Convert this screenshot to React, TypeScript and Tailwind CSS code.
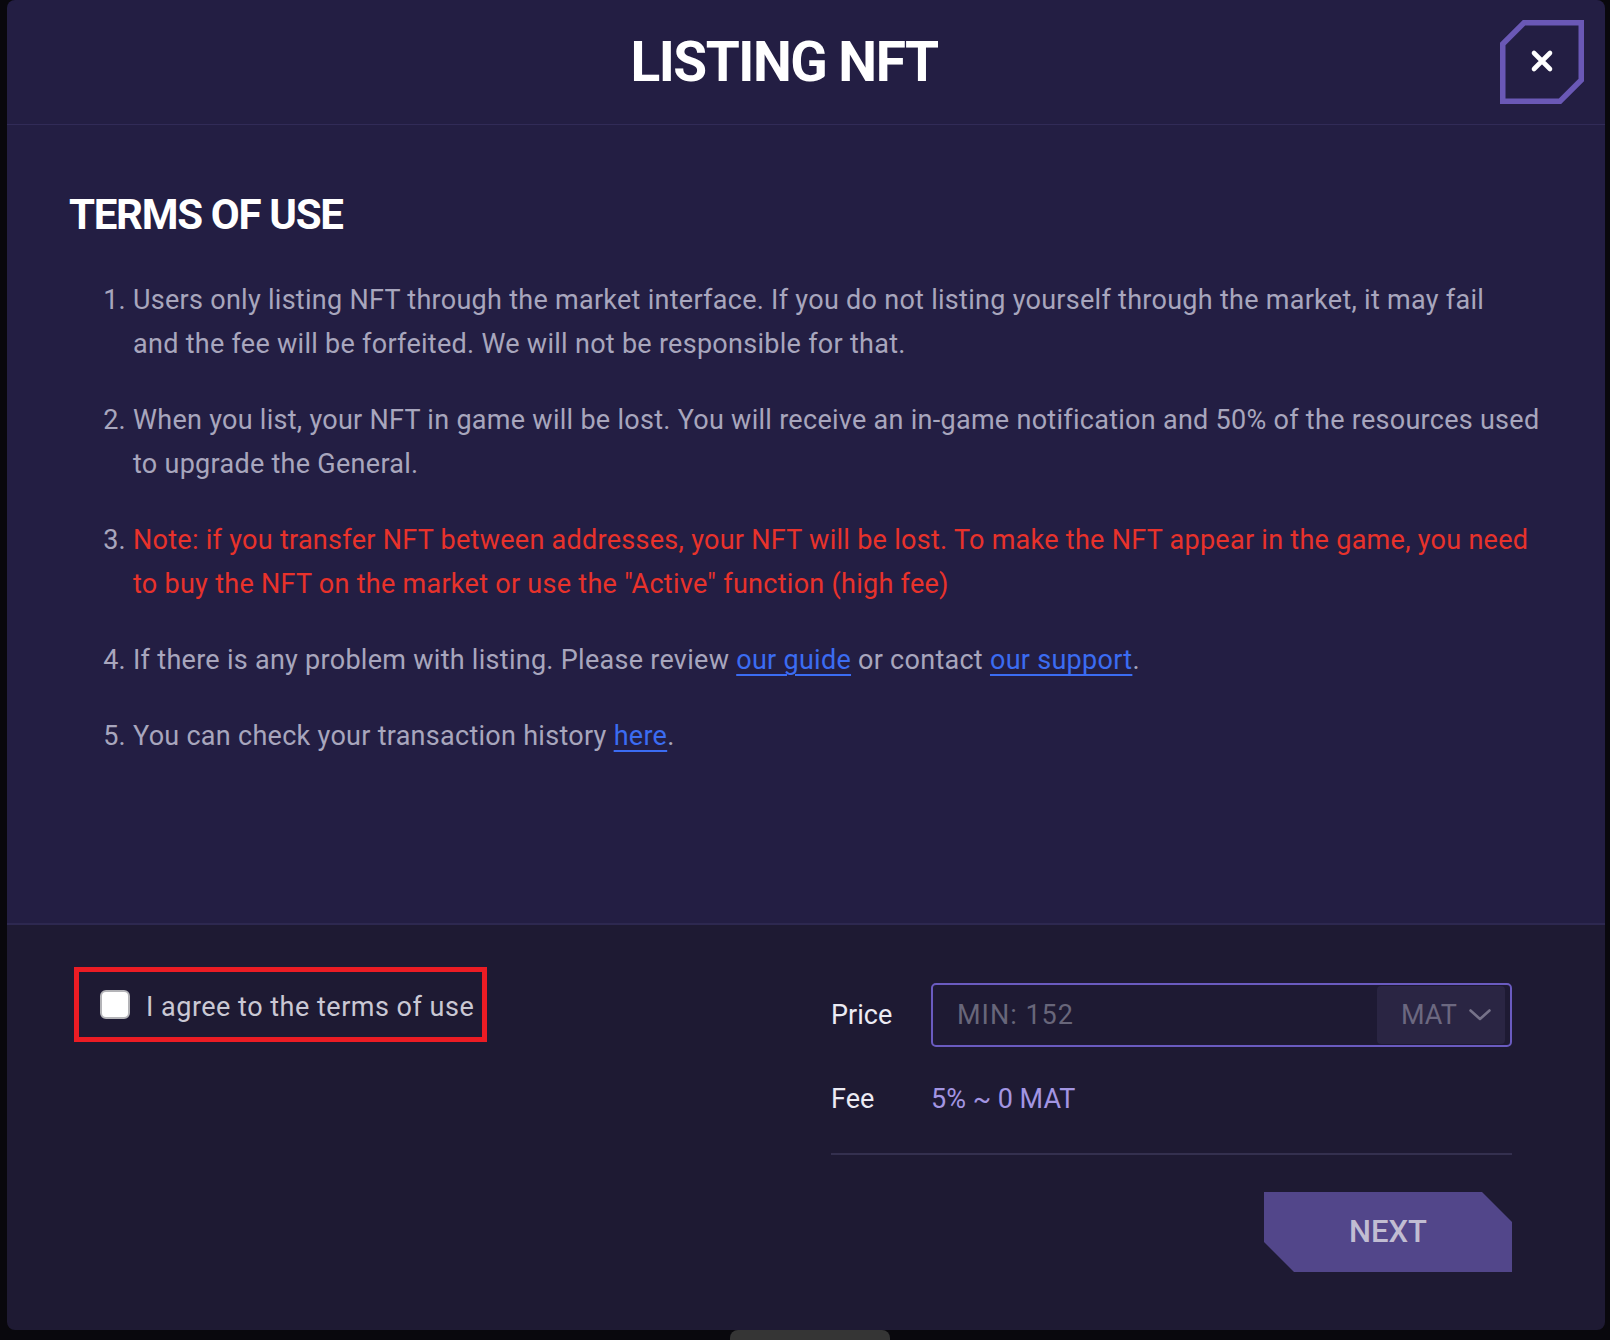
import React from "react";

function CloseButton() {
  return (
    <button className="absolute top-[20px] right-[21px] w-[84px] h-[84px] flex items-center justify-center">
      <svg width="84" height="84" viewBox="0 0 84 84" className="absolute inset-0">
        <polygon
          points="24,2.75 81.25,2.75 81.25,60 60,81.25 2.75,81.25 2.75,24"
          fill="none"
          stroke="#6a58b6"
          strokeWidth="5.5"
        />
      </svg>
      <svg width="24" height="24" viewBox="0 0 24 24" className="relative -mt-[3px]">
        <path d="M4 4 L20 20 M20 4 L4 20" stroke="#ffffff" strokeWidth="4.6" strokeLinecap="round" />
      </svg>
    </button>
  );
}

function Chevron() {
  return (
    <svg width="22" height="12" viewBox="0 0 22 12">
      <path d="M1.5 1.5 L11 10 L20.5 1.5" fill="none" stroke="#767289" strokeWidth="2.6" strokeLinecap="round" strokeLinejoin="round" />
    </svg>
  );
}

export default function App() {
  return (
    <div className="w-full h-[1340px] bg-[#09080d] overflow-hidden font-[Roboto,sans-serif]">
      <div className="ml-[7px] w-[1598px] rounded-lg overflow-hidden">
        {/* Header */}
        <div className="relative h-[125px] bg-[#231e43] border-b border-[#312b57] flex items-center justify-center pr-[44px]">
          <h1 className="text-white text-[55px] font-bold tracking-[-1.5px] leading-[124px]">LISTING NFT</h1>
          <CloseButton />
        </div>

        {/* Terms */}
        <div className="h-[800px] bg-[#231e43] border-b-2 border-[#2d2850] px-[62px] pt-[66px]">
          <h2 className="text-white text-[42px] font-bold leading-[48px] tracking-[-1.3px] mb-[39px]">TERMS OF USE</h2>
          <ol className="list-decimal list-outside pl-[64px] text-[27px] leading-[44px] tracking-[0.28px] text-[#a8a6bd] space-y-[32px] whitespace-nowrap">
            <li>
              Users only listing NFT through the market interface. If you do not listing yourself through the market, it may fail
              <br />
              and the fee will be forfeited. We will not be responsible for that.
            </li>
            <li>
              When you list, your NFT in game will be lost. You will receive an in-game notification and 50% of the resources used
              <br />
              to upgrade the General.
            </li>
            <li>
              <span className="text-[#e8322b]">
                Note: if you transfer NFT between addresses, your NFT will be lost. To make the NFT appear in the game, you need
                <br />
                to buy the NFT on the market or use the "Active" function (high fee)
              </span>
            </li>
            <li>
              If there is any problem with listing. Please review{" "}
              <a href="#" className="text-[#3b6cf2] underline underline-offset-[5px]">our guide</a> or contact{" "}
              <a href="#" className="text-[#3b6cf2] underline underline-offset-[5px]">our support</a>.
            </li>
            <li>
              You can check your transaction history{" "}
              <a href="#" className="text-[#3b6cf2] underline underline-offset-[5px]">here</a>.
            </li>
          </ol>
        </div>

        {/* Bottom */}
        <div className="h-[405px] bg-[#1e1a33] flex items-start pl-[67px] pr-[93px] pt-[42px]">
          <div className="w-[413px] h-[75px] border-[5px] border-[#ec1c24] flex items-center pl-[21px]">
            <div className="w-[30px] h-[29px] rounded-[6px] bg-white border-2 border-[#b4b4b8] shrink-0" />
            <span className="ml-[16px] mt-[5px] text-[27px] text-[#cac8d4] tracking-[0.5px]">I agree to the terms of use</span>
          </div>

          <div className="ml-auto w-[681px] mt-[16px]">
            <div className="flex items-center">
              <div className="w-[100px] text-[27px] text-[#ecebf3]">Price</div>
              <div className="w-[581px] h-[64px] border-2 border-[#6a5bc0] rounded-[5px] flex items-stretch">
                <div className="flex-1 flex items-center pl-[24px] text-[27px] tracking-[1px] text-[#68667a]">MIN: 152</div>
                <div className="my-[1px] mr-[5px] w-[128px] rounded-[4px] bg-[#2a2543] flex items-center pl-[24px] gap-[12px]">
                  <span className="text-[27px] text-[#6c6880]">MAT</span>
                  <Chevron />
                </div>
              </div>
            </div>
            <div className="flex items-center h-[40px] mt-[32px]">
              <div className="w-[100px] text-[27px] text-[#ecebf3]">Fee</div>
              <div className="text-[27px] text-[#a395e2]">5% ~ 0 MAT</div>
            </div>
            <div className="mt-[34px] border-t-2 border-[#34304f]" />
            <div className="flex justify-end mt-[37px]">
              <button className="w-[248px] h-[80px] bg-[#52468a] [clip-path:polygon(0_0,218px_0,248px_30px,248px_80px,30px_80px,0_50px)] flex items-center justify-center">
                <span className="text-[31px] font-medium text-[#c1bdd2]">NEXT</span>
              </button>
            </div>
          </div>
        </div>
      </div>
      <div className="ml-[730px] w-[160px] h-[10px] bg-[#353535] rounded-t-[8px]" />
    </div>
  );
}
